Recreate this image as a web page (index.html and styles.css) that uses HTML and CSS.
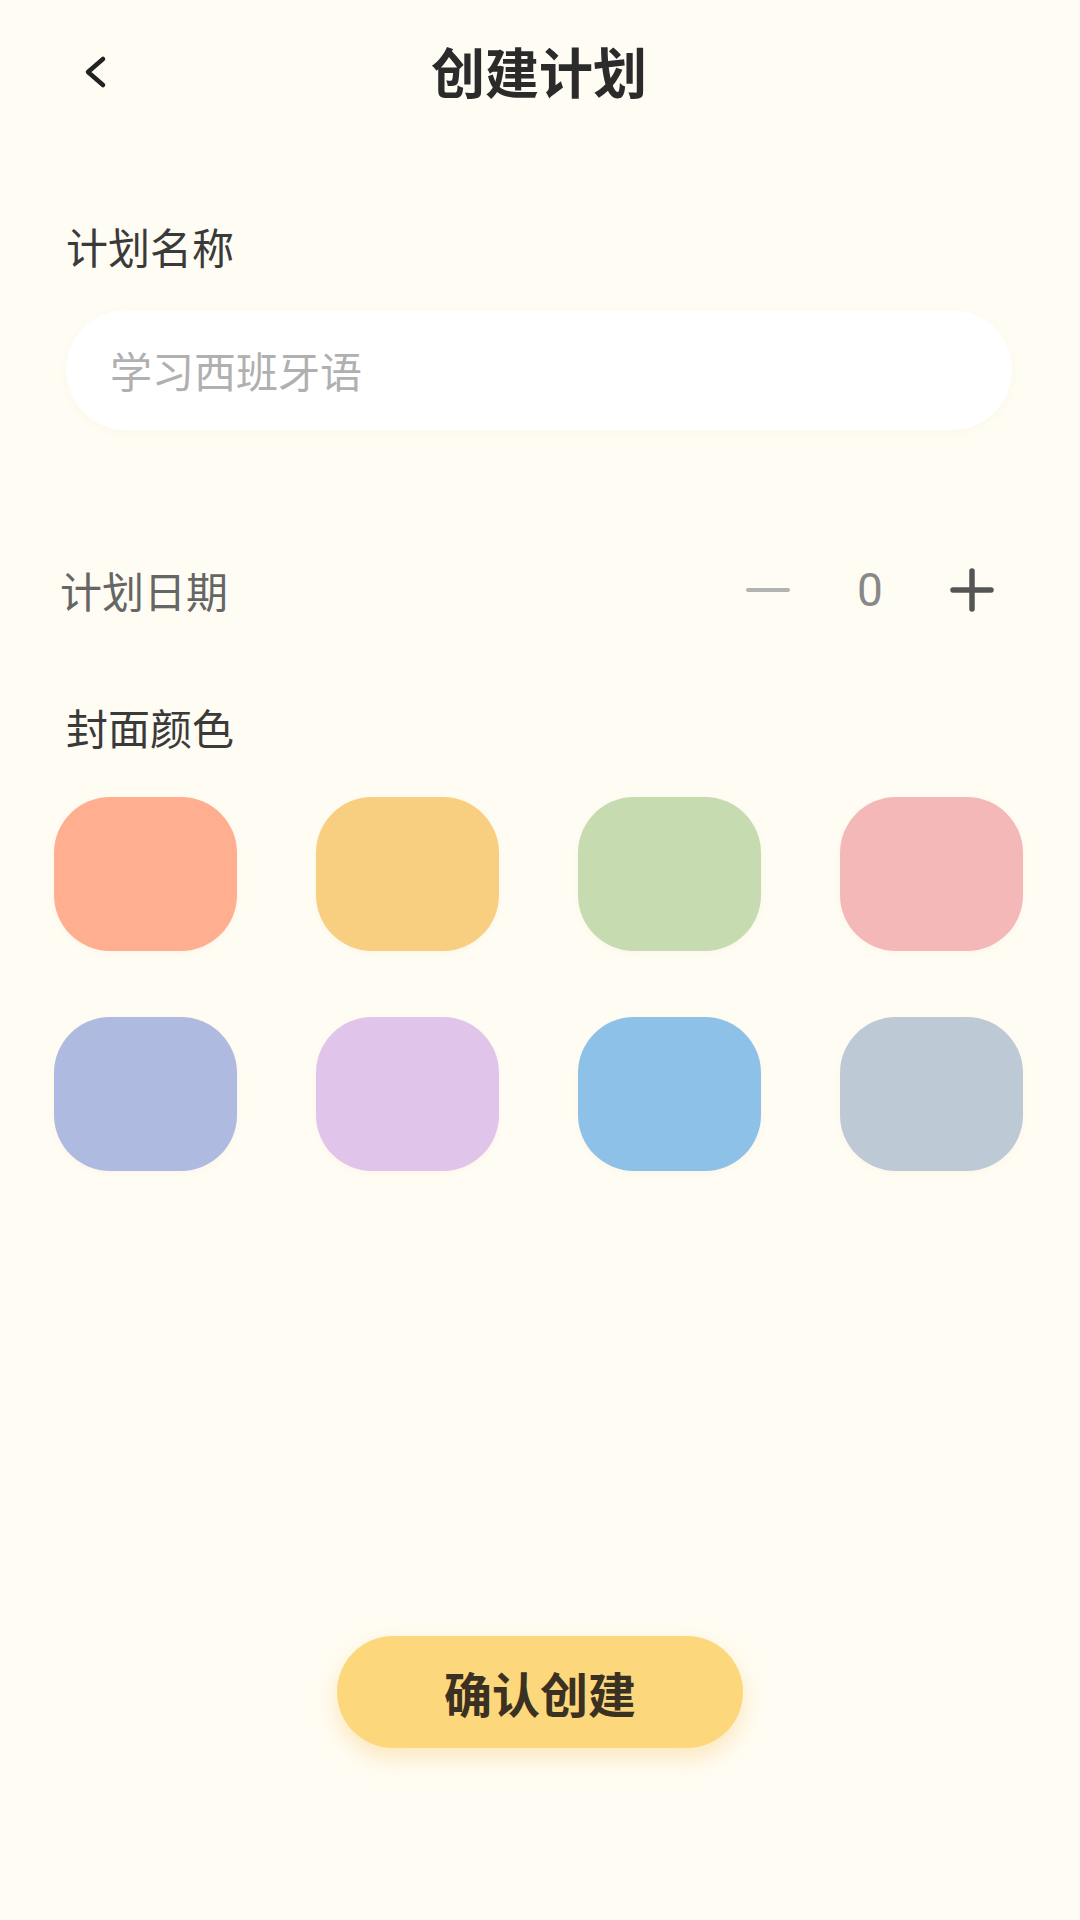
FILE: index.html
```html
<!DOCTYPE html>
<html lang="zh-CN">
<head>
<meta charset="utf-8">
<title>创建计划</title>
<link rel="stylesheet" href="styles.css">
</head>
<body>
<div class="page">
  <header class="header">
    <button class="back" aria-label="返回">
      <svg width="40" height="40" viewBox="0 0 40 40"><path d="M27 8 L12 21 L27 34" fill="none" stroke="#222" stroke-width="4.5" stroke-linecap="round" stroke-linejoin="round"/></svg>
    </button>
    <h1 class="title">创建计划</h1>
  </header>

  <div class="label">计划名称</div>
  <div class="input"><span class="placeholder">学习西班牙语</span></div>

  <div class="date-row">
    <span class="date-label">计划日期</span>
    <div class="stepper">
      <span class="step">
        <svg width="44" height="44" viewBox="0 0 44 44"><path d="M2 22 H42" stroke="#b3b3b3" stroke-width="4" stroke-linecap="round"/></svg>
      </span>
      <span class="step count">0</span>
      <span class="step">
        <svg width="44" height="44" viewBox="0 0 44 44"><path d="M3 22 H41 M22 3 V41" stroke="#555" stroke-width="5.5" stroke-linecap="round"/></svg>
      </span>
    </div>
  </div>

  <div class="label label-cover">封面颜色</div>
  <div class="swatches">
    <div class="swatch c1"></div>
    <div class="swatch c2"></div>
    <div class="swatch c3"></div>
    <div class="swatch c4"></div>
    <div class="swatch c5"></div>
    <div class="swatch c6"></div>
    <div class="swatch c7"></div>
    <div class="swatch c8"></div>
  </div>

  <div class="actions">
    <button class="confirm">确认创建</button>
  </div>
</div>
</body>
</html>
```

FILE: styles.css
```css
html, body {
  margin: 0;
  padding: 0;
  background: #FFFCF3;
}
body {
  font-family: "Noto Sans CJK SC", "Noto Sans", sans-serif;
  color: #333;
}
.page {
  width: 1080px;
  height: 1920px;
  display: flex;
  flex-direction: column;
}
.header {
  height: 142px;
  display: flex;
  align-items: center;
  justify-content: center;
  position: relative;
}
.back {
  position: absolute;
  left: 76px;
  top: 51px;
  width: 40px;
  height: 40px;
  padding: 0;
  border: 0;
  background: none;
  display: flex;
}
.title {
  margin: 0 0 0 -2px;
  font-size: 54px;
  line-height: 54px;
  font-weight: 700;
  color: #2b2b2b;
}
.label {
  margin: 83px 0 0 66px;
  font-size: 42px;
  line-height: 42px;
  font-weight: 400;
  color: #3a3a3a;
}
.input {
  margin: 43px 68px 0 66px;
  height: 120px;
  border-radius: 60px;
  background: #fff;
  box-shadow: 0 2px 10px rgba(200, 190, 160, 0.08);
  display: flex;
  align-items: center;
  padding-left: 44px;
}
.placeholder {
  font-size: 42px;
  line-height: 42px;
  color: #b0b0b0;
}
.date-row {
  margin-top: 130px;
  height: 60px;
  display: flex;
  align-items: center;
  justify-content: space-between;
  padding: 0 68px 0 60px;
}
.date-label {
  font-size: 42px;
  line-height: 42px;
  color: #666;
}
.stepper {
  display: flex;
  align-items: center;
  gap: 22px;
}
.step {
  width: 80px;
  height: 60px;
  display: flex;
  align-items: center;
  justify-content: center;
}
.count {
  font-family: "Roboto", "Noto Sans", sans-serif;
  font-size: 46px;
  font-weight: 400;
  color: #888;
}
.label-cover {
  margin-top: 86px;
}
.swatches {
  margin-top: 49px;
  padding: 0 56px 0 54px;
  display: grid;
  grid-template-columns: repeat(4, 183px);
  grid-auto-rows: 154px;
  column-gap: 79px;
  row-gap: 66px;
}
.swatch {
  border-radius: 56px;
  box-shadow: 0 2px 6px rgba(180, 160, 120, 0.06);
}
.c1 { background: #FFAE90; }
.c2 { background: #F8CF80; }
.c3 { background: #C6DCB0; }
.c4 { background: #F5B8B8; }
.c5 { background: #AEBAE0; }
.c6 { background: #E0C4EA; }
.c7 { background: #8EC1E8; }
.c8 { background: #BDCAD6; }
.actions {
  margin-top: 465px;
  display: flex;
  justify-content: center;
}
.confirm {
  width: 406px;
  height: 112px;
  border: 0;
  border-radius: 56px;
  background: #FDD77B;
  box-shadow: 0 10px 22px rgba(245, 195, 90, 0.35);
  font-family: "Noto Sans CJK SC", "Noto Sans", sans-serif;
  font-size: 48px;
  font-weight: 700;
  color: #3a3122;
  padding: 0;
}
```
